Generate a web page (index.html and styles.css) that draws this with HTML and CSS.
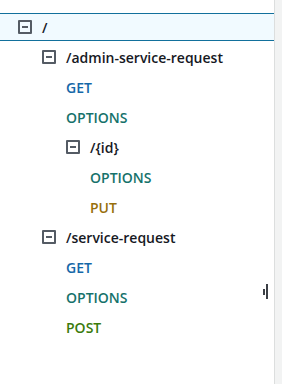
FILE: index.html
```html
<!DOCTYPE html>
<html lang="en">
<head>
    <meta charset="UTF-8">
    <meta name="viewport" content="width=device-width, initial-scale=1.0">
    <title>Resources</title>
    <link rel="stylesheet" href="styles.css">
</head>
<body>
    <div class="layout">
        <!-- Resource tree -->
        <div class="tree">
            <div class="row selected level-0">
                <span class="toggle"></span>
                <span class="path">/</span>
            </div>
            <div class="row level-1">
                <span class="toggle"></span>
                <span class="path">/admin-service-request</span>
            </div>
            <div class="row level-2"><span class="method get">GET</span></div>
            <div class="row level-2"><span class="method options">OPTIONS</span></div>
            <div class="row level-2">
                <span class="toggle"></span>
                <span class="path">/{id}</span>
            </div>
            <div class="row level-3"><span class="method options">OPTIONS</span></div>
            <div class="row level-3"><span class="method put">PUT</span></div>
            <div class="row level-1">
                <span class="toggle"></span>
                <span class="path">/service-request</span>
            </div>
            <div class="row level-2"><span class="method get">GET</span></div>
            <div class="row level-2"><span class="method options">OPTIONS</span></div>
            <div class="row level-2"><span class="method post">POST</span></div>

            <!-- panel resize handle -->
            <div class="handle">
                <span class="bar short"></span>
                <span class="bar tall"></span>
            </div>
        </div>

        <div class="side"></div>
    </div>
</body>
</html>
```

FILE: styles.css
```css
body {
    margin: 0;
    padding: 0;
    background: #ffffff;
    font-family: "Open Sans", "Noto Sans", sans-serif;
    color: #16191f;
}
.layout {
    display: flex;
    height: 384px;
}
.tree {
    position: relative;
    width: 274px;
    padding-top: 12px;
}
.side {
    flex: 1;
    background: #f2f3f3;
    border-left: 1px solid #dcdede;
}
.row {
    display: flex;
    align-items: center;
    height: 30px;
    box-sizing: border-box;
    font-size: 14px;
    font-weight: 600;
}
.level-0 { padding-left: 18px; }
.level-1 { padding-left: 42px; }
.level-2 { padding-left: 66px; }
.level-3 { padding-left: 90px; }
.selected {
    height: 28px;
    margin: 1px 0;
    background: #f1faff;
    border-top: 1px solid #12709c;
    border-bottom: 1px solid #12709c;
}
.toggle {
    position: relative;
    width: 14px;
    height: 14px;
    box-sizing: border-box;
    border: 2px solid #545b64;
    border-radius: 1px;
    margin-right: 10px;
}
.toggle::after {
    content: "";
    position: absolute;
    left: 2px;
    top: 4px;
    width: 6px;
    height: 2px;
    background: #545b64;
}
.path { color: #16191f; }
.get { color: #1467a8; }
.options { color: #16726b; }
.put { color: #976f0b; }
.post { color: #3a7b0c; }
.handle {
    position: absolute;
    left: 263px;
    top: 284px;
    display: flex;
    align-items: center;
    gap: 1px;
}
.bar {
    display: block;
    width: 2px;
    background: #3b3f45;
}
.bar.short { height: 6px; }
.bar.tall { height: 15px; }
```
